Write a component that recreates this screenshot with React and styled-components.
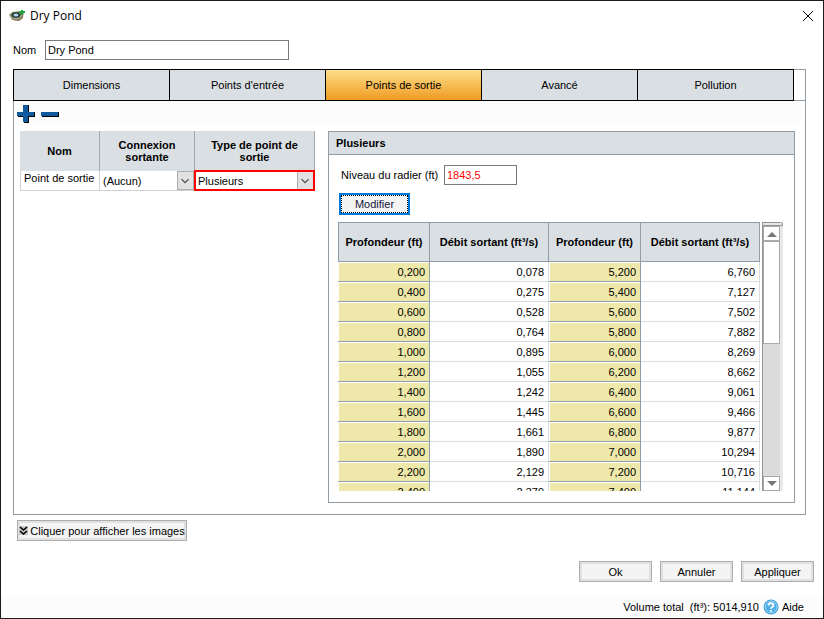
import { createGlobalStyle, styled } from "styled-components";

const GlobalStyle = createGlobalStyle`
  *,
  *::before,
  *::after {
    box-sizing: border-box;
  }

  body {
    margin: 0;
    background: #fff;
    color: #000;
    font-family: "Liberation Sans", Arial, sans-serif;
    font-size: 11px;
    line-height: 14px;
  }

  button,
  input,
  select {
    font: inherit;
    color: inherit;
    border-radius: 0;
  }
`;

const Window = styled.main`
  display: flex;
  flex-direction: column;
  min-height: 100vh;
  border: 1px solid #1c1c1c;
`;
const TitleBar = styled.header`
  display: flex;
  align-items: center;
  gap: 5px;
  height: 30px;
  padding: 0 9px 0 8px;

  h1 {
    flex: 1;
    margin: 0;
    font-family: "Open Sans", "Noto Sans", sans-serif;
    font-size: 12px;
    font-weight: 400;
  }
`;
const CloseButton = styled.button`
  display: flex;
  padding: 0;
  border: 0;
  background: none;
`;
const NameRow = styled.div`
  display: grid;
  grid-template-columns: 32px 1fr;
  align-items: center;
  padding: 9px 12px;
`;
const TextBox = styled.input`
  width: ${(props) => props.$width};
  height: 20px;
  padding: 0 2px;
  border: 1px solid #7a7a7a;
  background: #fff;
  color: ${(props) => (props.$invalid ? "#ff0000" : "#000")};
  outline: none;
`;
const TabFrame = styled.section`
  margin: 0 17px 0 12px;
  border: 1px solid #929ca4;
  border-top: 0;
`;
const TabBar = styled.nav`
  display: flex;
  height: 32px;
  margin-left: -1px;
  padding-right: 11px;
  border: solid #929ca4;
  border-width: 1px 0;
`;
const Tab = styled.button`
  flex: 1;
  margin: -1px 0;
  padding: 0;
  border: 1px solid #000;
  background: ${(props) =>
    props.$active ? "linear-gradient(#fde08a, #f09a22)" : "#dadfe3"};

  & + & {
    border-left: 0;
  }
`;
const Toolbar = styled.div`
  display: flex;
  align-items: center;
  gap: 6px;
  height: 24px;
  margin-right: 4px;
  padding: 2px 3px 0;
  background: #fcfcfc;
`;
const ToolButton = styled.button`
  display: flex;
  padding: 0;
  border: 0;
  background: none;
`;
const TabBody = styled.div`
  display: flex;
  align-items: flex-start;
  gap: 13px;
  padding: 6px 10px 11px 6px;
`;
const OutletTable = styled.table`
  width: 295px;
  table-layout: fixed;
  border-collapse: separate;
  border-spacing: 0;

  th {
    height: 40px;
    padding: 0 10px;
    border-right: 1px solid #a6a9ac;
    background: #dadfe3;
    font-weight: 700;
    line-height: 12px;
  }

  td {
    height: 20px;
    padding: 0;
    border: solid #d0d0d0;
    border-width: 0 1px 1px 0;
    white-space: nowrap;
  }

  td:first-child {
    border-left-width: 1px;
  }
`;
const CellText = styled.div`
  height: 19px;
  padding: 0 3px;
`;
const SelectWrap = styled.div`
  display: grid;
  grid-template-columns: 1fr 17px;
  height: 19px;
  outline: ${(props) => (props.$invalid ? "2px solid #ff0000" : "none")};
  outline-offset: -1px;

  select {
    grid-area: 1 / 1 / 2 / 3;
    min-width: 0;
    padding: 0 3px;
    border: 0;
    background: none;
    appearance: none;
    outline: none;
  }

  svg {
    grid-area: 1 / 2;
    width: 17px;
    height: 19px;
    border: 1px solid #adadad;
    background: #e1e1e1;
    pointer-events: none;
  }
`;
const Panel = styled.section`
  flex: 1;
  min-width: 0;
  border: 1px solid #929ca4;

  h2 {
    height: 23px;
    margin: 0;
    padding: 0 7px;
    border-bottom: 1px solid #929ca4;
    background: #dadfe3;
    font-size: 11px;
    line-height: 23px;
  }
`;
const PanelBody = styled.div`
  padding: 10px 11px 11px 9px;
`;
const InvertRow = styled.div`
  display: grid;
  grid-template-columns: 103px 1fr;
  align-items: center;
  padding: 0 3px;
`;
const Button = styled.button`
  display: flex;
  align-items: center;
  justify-content: center;
  gap: 2px;
  width: ${(props) => props.$width || "73px"};
  height: 21px;
  padding: 0;
  border: 1px solid #adadad;
  background: #f4f4f4;
  box-shadow: inset 0 0 0 2px #e1e1e1;
`;
const EditButton = styled(Button)`
  height: 22px;
  margin: 8px 1px 7px;
  border: 2px solid #0078d7;
  box-shadow: none;
  color: #14143c;
  outline: 1px dotted #000;
  outline-offset: -3px;
`;
const GridArea = styled.div`
  display: flex;
  gap: 2px;
  height: 269px;
`;
const GridView = styled.div`
  flex: 1;
  overflow: hidden;
`;
const FlowTable = styled.table`
  width: 100%;
  table-layout: fixed;
  border-collapse: separate;
  border-spacing: 0;

  th {
    height: 40px;
    padding: 0;
    border: solid #929ca4;
    border-width: 1px 1px 1px 0;
    background: #dadfe3;
    font-weight: 700;
    white-space: nowrap;
  }

  th:first-child {
    border-left-width: 1px;
  }

  th:nth-child(odd) {
    width: 92px;
  }

  td {
    height: 20px;
    padding: 0 4px;
    border: solid #dadde0;
    border-width: 0 1px 1px 0;
    text-align: right;
  }

  td:nth-child(odd) {
    border-color: #929ca4;
    background: #eee8aa;
    box-shadow: inset 1px 1px #fff;
  }
`;
const ScrollBar = styled.div`
  display: flex;
  flex-direction: column;
  width: 21px;
  border-top: 1px solid #929292;
  border-right: 3px solid #e8e8e8;
  border-left: 1px solid #929292;
  background: #dbdbdb;
`;
const ScrollCap = styled.div`
  height: 3px;
  margin-right: -3px;
  border-right: 1px solid #929292;
  border-bottom: 1px solid #929292;
  background: #e8e8e8;
`;
const ScrollButton = styled.button`
  display: flex;
  align-items: center;
  justify-content: center;
  height: 15px;
  padding: 0;
  border: 1px solid #a9a9a9;
  background: #fff;
`;
const ScrollThumb = styled.div`
  height: 103px;
  border: 1px solid #a9a9a9;
  background: #fff;
`;
const ScrollTrack = styled.div`
  flex: 1;
`;
const ImagesRow = styled.div`
  padding: 5px 16px;
`;
const Actions = styled.div`
  display: flex;
  justify-content: flex-end;
  gap: 8px;
  margin-top: auto;
  padding: 0 9px 14px;
`;
const StatusBar = styled.footer`
  display: flex;
  align-items: center;
  justify-content: flex-end;
  gap: 4px;
  height: 22px;
  padding: 0 19px;
  background: #fcfcfc;

  a {
    display: flex;
    align-items: center;
    gap: 3px;
    color: inherit;
    text-decoration: none;
  }
`;

const tabs = [
  "Dimensions",
  "Points d'entrée",
  "Points de sortie",
  "Avancé",
  "Pollution",
];

const flows = [
  ["0,200", "0,078", "5,200", "6,760"],
  ["0,400", "0,275", "5,400", "7,127"],
  ["0,600", "0,528", "5,600", "7,502"],
  ["0,800", "0,764", "5,800", "7,882"],
  ["1,000", "0,895", "6,000", "8,269"],
  ["1,200", "1,055", "6,200", "8,662"],
  ["1,400", "1,242", "6,400", "9,061"],
  ["1,600", "1,445", "6,600", "9,466"],
  ["1,800", "1,661", "6,800", "9,877"],
  ["2,000", "1,890", "7,000", "10,294"],
  ["2,200", "2,129", "7,200", "10,716"],
  ["2,400", "2,379", "7,400", "11,144"],
];

function PondIcon() {
  return (
    <svg width="16" height="16" viewBox="0 0 16 16">
      <path d="M0 7 3 4l6-1 6 2-1 5-4 3-7-1z" fill="#b5a58c" />
      <path d="m1 8 3 4 6 1 4-3v-3l-4 4H4z" fill="#8f7b60" />
      <path d="M1 7 4 4h6l3 2-3 4H4z" fill="#4c7a4c" />
      <ellipse cx="7" cy="7" rx="4" ry="2.5" fill="#22343e" />
      <ellipse cx="7" cy="7" rx="2.5" ry="1.5" fill="#b4d4ec" />
      <path d="M12 2h2v1h2v2h-2v2h-2V5h-2V3h2z" fill="#22a03c" />
    </svg>
  );
}

function ArrowIcon({ down }) {
  return (
    <svg width="10" height="6" viewBox="0 0 10 6">
      <path d={down ? "M0 0h10L5 5z" : "M0 6h10L5 1z"} fill="#777" />
    </svg>
  );
}

function SelectBox({ label, value, invalid }) {
  return (
    <SelectWrap $invalid={invalid}>
      <select aria-label={label} defaultValue={value}>
        <option>{value}</option>
      </select>
      <svg viewBox="0 0 17 19">
        <path d="m4 8 4 4 4-4" fill="none" stroke="#444" strokeWidth="1.2" />
      </svg>
    </SelectWrap>
  );
}

function FlowGrid() {
  return (
    <GridArea>
      <GridView>
        <FlowTable>
          <thead>
            <tr>
              <th>Profondeur (ft)</th>
              <th>Débit sortant (ft³/s)</th>
              <th>Profondeur (ft)</th>
              <th>Débit sortant (ft³/s)</th>
            </tr>
          </thead>
          <tbody>
            {flows.map((row) => (
              <tr key={row[0]}>
                {row.map((value) => (
                  <td key={value}>{value}</td>
                ))}
              </tr>
            ))}
          </tbody>
        </FlowTable>
      </GridView>
      <ScrollBar>
        <ScrollCap />
        <ScrollButton type="button" aria-label="Haut">
          <ArrowIcon />
        </ScrollButton>
        <ScrollThumb />
        <ScrollTrack />
        <ScrollButton type="button" aria-label="Bas">
          <ArrowIcon down />
        </ScrollButton>
      </ScrollBar>
    </GridArea>
  );
}

function App() {
  return (
    <Window>
      <GlobalStyle />
      <TitleBar>
        <PondIcon />
        <h1>Dry Pond</h1>
        <CloseButton type="button" aria-label="Fermer">
          <svg width="12" height="12" viewBox="0 0 12 12">
            <path d="m1 1 10 10M11 1 1 11" stroke="#000" />
          </svg>
        </CloseButton>
      </TitleBar>
      <NameRow>
        <label htmlFor="name">Nom</label>
        <TextBox id="name" type="text" defaultValue="Dry Pond" $width="244px" />
      </NameRow>
      <TabFrame>
        <TabBar>
          {tabs.map((tab) => (
            <Tab key={tab} type="button" $active={tab === "Points de sortie"}>
              {tab}
            </Tab>
          ))}
        </TabBar>
        <Toolbar>
          <ToolButton type="button" aria-label="Ajouter">
            <svg width="18" height="18" viewBox="0 0 18 18">
              <path d="M7 0h5v7h6v5h-6v6H7v-6H1V7h6z" fill="#000" />
              <path d="M6 0h5v7h6v4h-6v6H6v-6H0V7h6z" fill="#0f5a9c" />
            </svg>
          </ToolButton>
          <ToolButton type="button" aria-label="Supprimer">
            <svg width="18" height="18" viewBox="0 0 18 18">
              <path d="M1 7h17v5H1z" fill="#000" />
              <path d="M0 7h17v4H0z" fill="#0f5a9c" />
            </svg>
          </ToolButton>
        </Toolbar>
        <TabBody>
          <OutletTable>
            <colgroup>
              <col width="80" />
              <col width="95" />
              <col width="120" />
            </colgroup>
            <thead>
              <tr>
                <th>Nom</th>
                <th>Connexion sortante</th>
                <th>Type de point de sortie</th>
              </tr>
            </thead>
            <tbody>
              <tr>
                <td>
                  <CellText>Point de sortie</CellText>
                </td>
                <td>
                  <SelectBox label="Connexion sortante" value="(Aucun)" />
                </td>
                <td>
                  <SelectBox
                    label="Type de point de sortie"
                    value="Plusieurs"
                    invalid
                  />
                </td>
              </tr>
            </tbody>
          </OutletTable>
          <Panel>
            <h2>Plusieurs</h2>
            <PanelBody>
              <InvertRow>
                <label htmlFor="invert">Niveau du radier (ft)</label>
                <TextBox
                  id="invert"
                  type="text"
                  defaultValue="1843,5"
                  $width="73px"
                  $invalid
                />
              </InvertRow>
              <EditButton type="button" $width="71px">
                Modifier
              </EditButton>
              <FlowGrid />
            </PanelBody>
          </Panel>
        </TabBody>
      </TabFrame>
      <ImagesRow>
        <Button type="button" $width="170px">
          <svg width="9" height="9" viewBox="0 0 9 9">
            <path d="M0 0h9v9H0z" fill="#c8c8c8" />
            <path
              d="m1 1 3.5 3L8 1M1 5l3.5 3L8 5"
              fill="none"
              stroke="#000"
              strokeWidth="1.6"
            />
          </svg>
          Cliquer pour afficher les images
        </Button>
      </ImagesRow>
      <Actions>
        <Button type="button">Ok</Button>
        <Button type="button">Annuler</Button>
        <Button type="button">Appliquer</Button>
      </Actions>
      <StatusBar>
        <span>Volume total&nbsp; (ft³): 5014,910</span>
        <a href="#aide">
          <svg width="16" height="16" viewBox="0 0 16 16">
            <circle cx="8" cy="8" r="7.5" fill="#3b9fdb" />
            <circle cx="8" cy="8" r="6" fill="#4fb0e6" stroke="#a9d9f3" />
            <path
              d="M5.500 6.500c0-3 5-3 5 0 0 1.800-2.500 1.300-2.500 3.200M8 11v1.800"
              fill="none"
              stroke="#fff"
              strokeWidth="1.800"
            />
          </svg>
          Aide
        </a>
      </StatusBar>
    </Window>
  );
}

export default App;
